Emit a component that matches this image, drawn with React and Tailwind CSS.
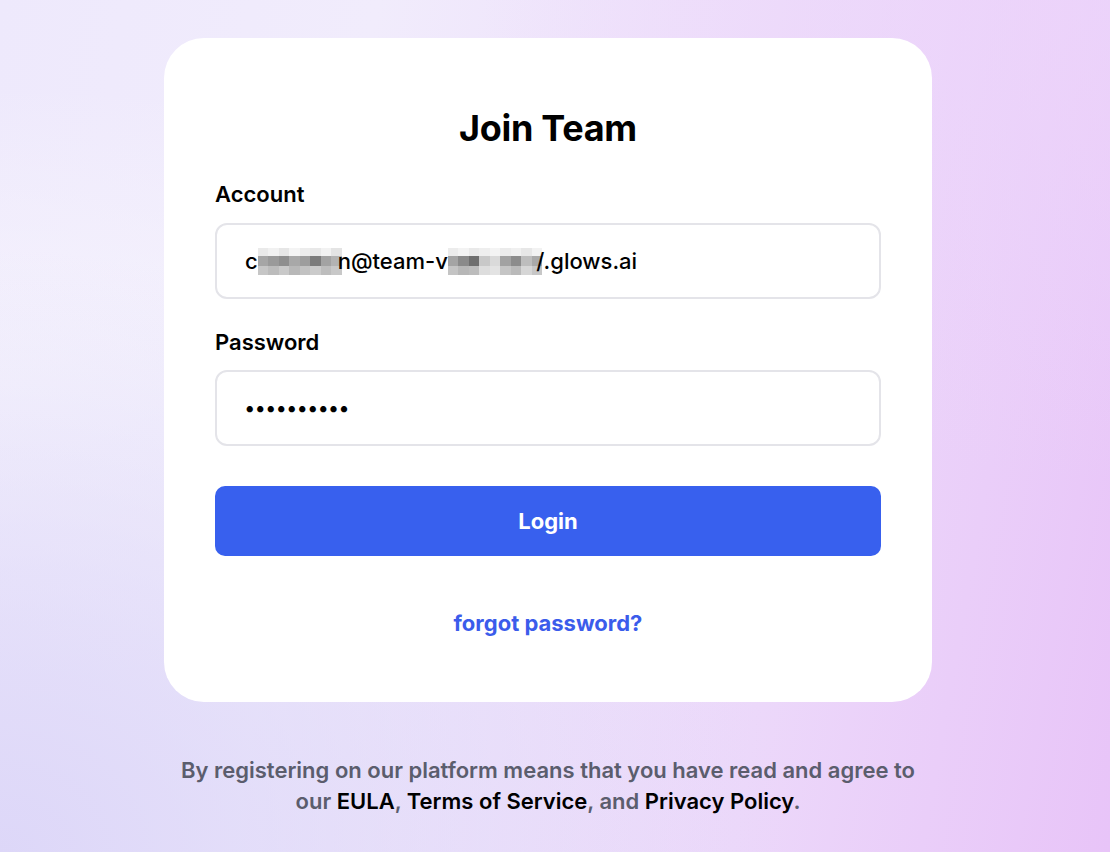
import React from "react";

const cellsA = [
  ["#eaeaea", "#f1f1f1", "#e6e6e6", "#f4f4f4", "#ececec", "#e8e8e8", "#f2f2f2", "#e4e4e4"],
  ["#a6a6a6", "#9a9a9a", "#8e8e8e", "#a8a8a8", "#9d9d9d", "#7c7c7c", "#a3a3a3", "#b3b3b3"],
  ["#c6c6c6", "#bcbcbc", "#c9c9c9", "#b8b8b8", "#c2c2c2", "#cbcbcb", "#bdbdbd", "#c8c8c8"],
];
const cellsB = [
  ["#ececec", "#f3f3f3", "#e9e9e9", "#eeeeee", "#f4f4f4", "#ebebeb", "#f0f0f0", "#e7e7e7", "#f2f2f2"],
  ["#a4a4a4", "#8a8a8a", "#6e6e6e", "#c8c8c8", "#dadada", "#a2a2a2", "#8c8c8c", "#bdbdbd", "#a9a9a9"],
  ["#c4c4c4", "#b7b7b7", "#bcbcbc", "#dddddd", "#e3e3e3", "#c5c5c5", "#bababa", "#d6d6d6", "#c7c7c7"],
];

function Mosaic({ cells }) {
  return (
    <span className="inline-flex flex-col">
      {cells.map((row, i) => (
        <span key={i} className="flex">
          {row.map((c, j) => (
            <span
              key={j}
              className={
                i === 0 ? "w-[10.5px] h-[8px]" : i === 1 ? "w-[10.5px] h-[10px]" : "w-[10.5px] h-[9px]"
              }
              style={{ backgroundColor: c }}
            />
          ))}
        </span>
      ))}
    </span>
  );
}

export default function App() {
  return (
    <div
      className="relative min-h-[852px] w-full overflow-hidden"
      style={{ fontFamily: "Inter, 'Noto Sans', sans-serif" }}
    >
      <div className="absolute inset-0 bg-[linear-gradient(100deg,#eee9fc_0%,#f1ecfc_30%,#ecd8fa_70%,#e8c4f8_100%)]" />
      <div className="absolute inset-0 bg-[radial-gradient(ellipse_at_0%_45%,rgba(246,244,253,0.9)_0%,rgba(246,244,253,0)_45%)]" />
      <div className="absolute inset-0 bg-[radial-gradient(ellipse_at_0%_100%,rgba(220,214,248,0.95)_0%,rgba(220,214,248,0)_50%)]" />
      <div className="absolute inset-0 bg-[radial-gradient(ellipse_at_100%_0%,rgba(237,214,251,0.7)_0%,rgba(237,214,251,0)_40%)]" />

      <div className="relative flex flex-col items-center pt-[38px] pr-[14px]">
        <div className="w-[768px] rounded-[40px] bg-white px-[51px] pt-[68px] pb-[65px]">
          <h1 className="text-center text-[36px] leading-[44px] font-bold text-black tracking-[-0.3px]">
            Join Team
          </h1>

          <div className="mt-[30px] text-[22px] leading-[28px] font-semibold text-black">Account</div>
          <div className="mt-[15px] flex h-[76px] items-center rounded-[12px] border-2 border-[#e4e4e9] px-[28px] text-[22px] font-medium text-black">
            <span className="flex items-center">
              <span>c</span>
              <Mosaic cells={cellsA} />
              <span className="-ml-[4px]">n@team-v</span>
              <Mosaic cells={cellsB} />
              <span className="-ml-[6px]">/.glows.ai</span>
            </span>
          </div>

          <div className="mt-[29px] text-[22px] leading-[28px] font-semibold text-black">Password</div>
          <div className="mt-[14px] flex h-[76px] items-center rounded-[12px] border-2 border-[#e4e4e9] px-[28px] text-[20px] font-bold text-black tracking-[1px]">
            ••••••••••
          </div>

          <button className="mt-[40px] flex h-[70px] w-full items-center justify-center rounded-[10px] bg-[#3860ee] text-[22px] font-bold text-white">
            Login
          </button>

          <div className="mt-[53px] text-center text-[22px] leading-[28px] font-bold text-[#3b5ceb]">
            forgot password?
          </div>
        </div>

        <p className="mt-[53px] text-center text-[22px] leading-[31px] font-semibold text-[#5b5d6d]">
          By registering on our platform means that you have read and agree to
          <br />
          our <span className="text-black">EULA</span>, <span className="text-black">Terms of Service</span>, and{" "}
          <span className="text-black">Privacy Policy</span>.
        </p>
      </div>
    </div>
  );
}
